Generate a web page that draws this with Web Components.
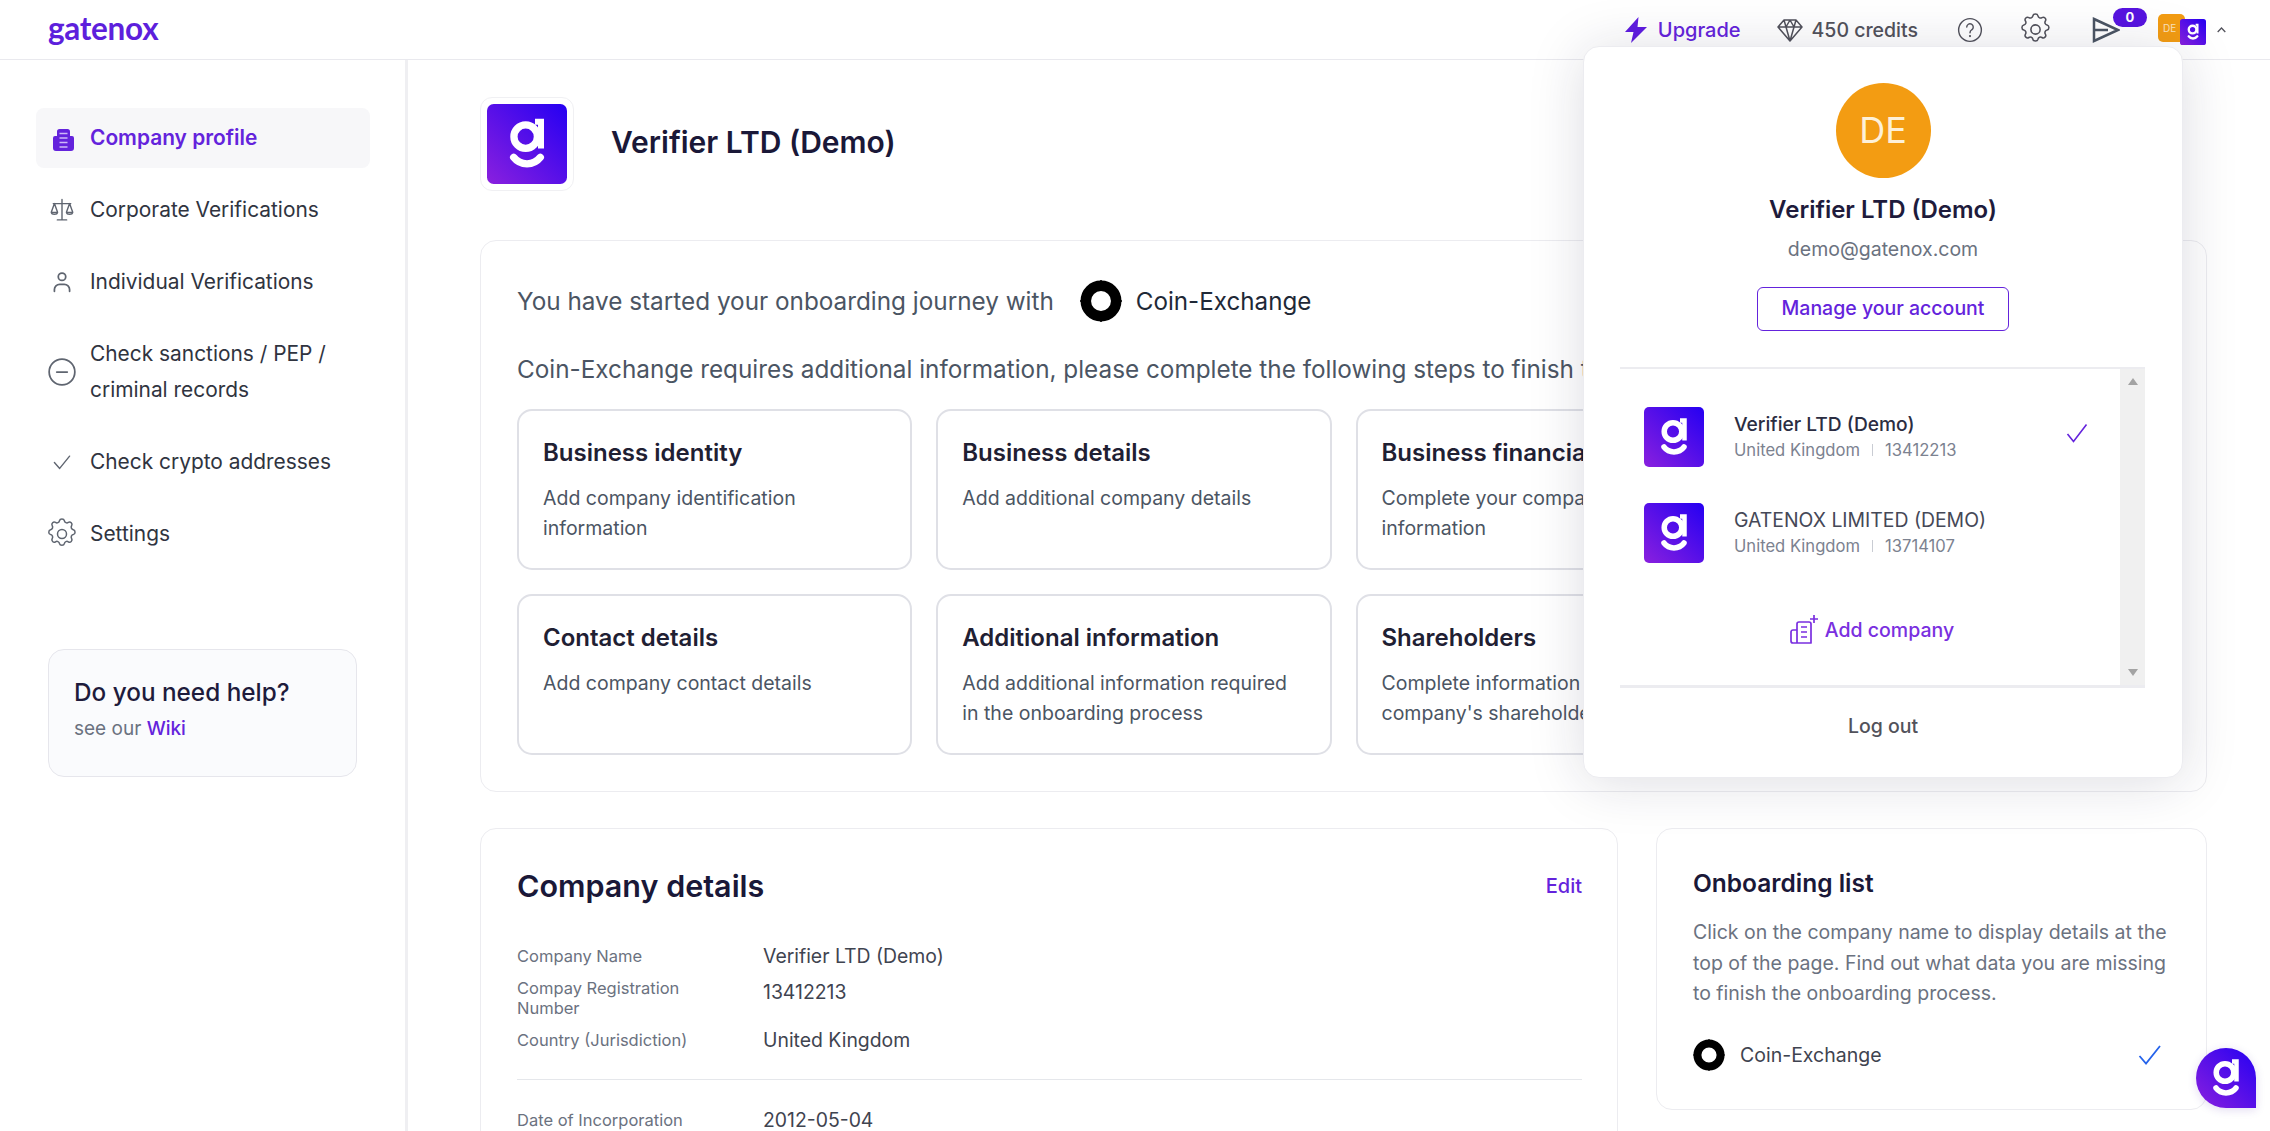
<!DOCTYPE html>
<html lang="en">
<head>
<meta charset="utf-8">
<title>Gatenox</title>
<style>
    html, body { margin: 0; height: 1131px; overflow: hidden; background: #fff; }
    body { font-family: Inter, "Liberation Sans", sans-serif; color: #1f2937; }
</style>
</head>
<body>
<gx-app>
    <gx-topbar slot="top"></gx-topbar>
    <gx-sidebar slot="side">
        <gx-nav-item icon="company" active>Company profile</gx-nav-item>
        <gx-nav-item icon="scale">Corporate Verifications</gx-nav-item>
        <gx-nav-item icon="user">Individual Verifications</gx-nav-item>
        <gx-nav-item icon="minus">Check sanctions / PEP / criminal records</gx-nav-item>
        <gx-nav-item icon="check">Check crypto addresses</gx-nav-item>
        <gx-nav-item icon="gear">Settings</gx-nav-item>
    </gx-sidebar>
    <gx-company-head>Verifier LTD (Demo)</gx-company-head>
    <gx-onboarding>
        <gx-step title="Business identity">Add company identification information</gx-step>
        <gx-step title="Business details">Add additional company details</gx-step>
        <gx-step title="Business financials">Complete your company financial information</gx-step>
        <span></span>
        <gx-step title="Contact details">Add company contact details</gx-step>
        <gx-step title="Additional information">Add additional information required in the onboarding process</gx-step>
        <gx-step title="Shareholders">Complete information about your company's shareholders</gx-step>
    </gx-onboarding>
    <gx-bottom-row>
        <gx-details>
            <gx-detail-row label="Company Name">Verifier LTD (Demo)</gx-detail-row>
            <gx-detail-row label="Compay Registration Number">13412213</gx-detail-row>
            <gx-detail-row label="Country (Jurisdiction)">United Kingdom</gx-detail-row>
            <hr slot="after">
            <gx-detail-row slot="after" label="Date of Incorporation">2012-05-04</gx-detail-row>
        </gx-details>
        <gx-onboarding-list></gx-onboarding-list>
    </gx-bottom-row>
    <gx-account-menu slot="overlay"></gx-account-menu>
    <gx-chat-bubble slot="overlay"></gx-chat-bubble>
</gx-app>

<script>
    // Small helper so each element only has to declare its markup
    function define(name, html, setup) {
        customElements.define(name, class extends HTMLElement {
            constructor() {
                super();
                this.attachShadow({ mode: 'open' });
            }
            connectedCallback() {
                const markup = typeof html === 'function' ? html(this) : html;
                this.shadowRoot.innerHTML = markup;
                if (setup) setup(this);
            }
        });
    }

    const PURPLE = '#6423dc';
    const stroke = (size, body, w = 1.5) => `<svg width="${size}" height="${size}" viewBox="0 0 24 24" fill="none" stroke="currentColor" stroke-width="${w}" stroke-linecap="round" stroke-linejoin="round">${body}</svg>`;

    const gearPath = '<path d="M10.3 3.2c.4-1.6 2.9-1.6 3.3 0a1.7 1.7 0 0 0 2.6 1.1c1.4-.9 3.1.8 2.2 2.2a1.7 1.7 0 0 0 1.1 2.6c1.6.4 1.6 2.9 0 3.3a1.7 1.7 0 0 0-1.1 2.6c.9 1.4-.8 3.1-2.2 2.2a1.7 1.7 0 0 0-2.6 1.1c-.4 1.6-2.9 1.6-3.3 0a1.7 1.7 0 0 0-2.6-1.1c-1.4.9-3.1-.8-2.2-2.2a1.7 1.7 0 0 0-1.1-2.6c-1.6-.4-1.6-2.9 0-3.3a1.7 1.7 0 0 0 1.1-2.6c-.9-1.4.8-3.1 2.2-2.2a1.7 1.7 0 0 0 2.6-1.1z"/><circle cx="12" cy="12" r="3"/>';

    const icons = {
        company: `<svg width="28" height="28" viewBox="0 0 28 28"><path fill="${PURPLE}" d="M9 7.500A2.500 2.500 0 0 1 11.500 5h8A2.500 2.500 0 0 1 22 7.500V12h2a2 2 0 0 1 2 2v10a3 3 0 0 1-3 3H8a3 3 0 0 1-3-3V14a2 2 0 0 1 2-2h2z"/><path fill="none" stroke="#cdb9f7" stroke-width="1.500" d="M11.500 9.500h8M11.500 14h8M11.500 18.500h8M11.500 23h8"/></svg>`,
        scale: stroke(28, '<path d="M12 3v17M8 20.500h8M4.500 6.500h15M5.500 6.500 2.800 14h5.400zM18.500 6.500 15.800 14h5.400zM2.800 14c.4 2.200 5 2.200 5.400 0M15.800 14c.4 2.200 5 2.200 5.400 0"/>', 1.200),
        user: stroke(28, '<circle cx="12" cy="7.500" r="3.200"/><path d="M5.500 20v-1.500a4.500 4.500 0 0 1 4.500-4.500h4a4.500 4.500 0 0 1 4.500 4.500V20"/>'),
        minus: stroke(28, '<circle cx="12" cy="12" r="11"/><path d="M7.500 12h9"/>'),
        check: stroke(28, '<path d="M5.500 12.500 10 17.500 18.500 7"/>', 1.200),
        gear: `<span style="margin:-4px;display:flex">${stroke(36, gearPath, 1)}</span>`
    };

    // Gatenox "g" mark, 60 unit box
    let markId = 0;
    function mark(size, radius = 5) {
        const id = 'gx' + (++markId);
        return `<svg width="${size}" height="${size}" viewBox="0 0 60 60" style="display:block">
            <defs><linearGradient id="${id}" x1="0" y1="1" x2="1" y2="0"><stop offset="0" stop-color="#8a20de"/><stop offset="1" stop-color="#2500f2"/></linearGradient></defs>
            <rect width="60" height="60" rx="${radius}" fill="url(#${id})"/>
            <circle cx="29" cy="24.500" r="8.800" fill="none" stroke="#fff" stroke-width="5.500"/>
            <path d="M36 13.400h4.500v20" fill="none" stroke="#fff" stroke-width="4.500"/>
            <path d="M20 40c5 6.500 15 6.500 20 0" fill="none" stroke="#fff" stroke-width="5.500" stroke-linecap="round"/>
        </svg>`;
    }

    function coin(size) {
        return `<svg width="${size}" height="${size}" viewBox="0 0 42 42" style="display:block;flex:none">
            <circle cx="21" cy="21" r="15.200" fill="none" stroke="#000" stroke-width="10.500"/>
            <path d="M21 0v6M21 36v6M0 21h6M36 21h6" stroke="#000" stroke-width="1.500"/>
        </svg>`;
    }

    define('gx-app', `
        <style>
            :host { display: block; position: relative; height: 1131px; overflow: hidden; background: #fff; }
            .body { display: flex; height: 1071px; }
            .main { flex: 1; min-width: 0; padding: 37px 63px 0 72px; }
        </style>
        <slot name="top"></slot>
        <div class="body">
            <slot name="side"></slot>
            <div class="main"><slot></slot></div>
        </div>
        <slot name="overlay"></slot>
    `);

    define('gx-topbar', `
        <style>
            :host { display: flex; align-items: center; height: 59px; border-bottom: 1px solid #e9e9ee; background: #fff; padding-left: 48px; box-sizing: content-box; }
            .logo { font: 700 31.500px/1 Lato, Inter, sans-serif; color: #5d1fdc; letter-spacing: -.3px; padding-bottom: 2px; }
            .right { margin-left: auto; display: flex; align-items: center; height: 100%; padding-right: 44px; color: #52525b; font-size: 20px; font-weight: 500; }
            .item { display: flex; align-items: center; }
            .upgrade { color: ${PURPLE}; gap: 10px; margin-right: 36px; }
            .credits { gap: 9px; margin-right: 39px; font-size: 19.500px; }
            .help { margin-right: 34px; display: flex; }
            .gear { margin-right: 38px; display: flex; }
            .send { position: relative; display: flex; margin-right: 38px; color: #4b5563; }
            .badge { position: absolute; left: 21px; top: -9px; width: 34px; height: 19px; border-radius: 10px; background: #5714e0; color: #fff; font-size: 13px; font-weight: 700; line-height: 19px; text-align: center; }
            .avatars { position: relative; width: 48px; height: 30px; margin-right: 11px; }
            .de { position: absolute; left: 0; top: -1px; width: 27px; height: 28px; border-radius: 5px; background: #f39c12; color: #fbe3bc; font-size: 10px; font-weight: 400; line-height: 28px; padding-left: 5px; box-sizing: border-box; }
            .g { position: absolute; left: 22px; top: 4px; }
            .chev { color: #52525b; display: flex; }
        </style>
        <div class="logo">gatenox</div>
        <div class="right">
            <div class="item upgrade">
                <svg width="24" height="26" viewBox="0 0 24 26"><path fill="#5f1ce0" d="M14.500 0 1 15h8.500L7 26 23 10h-9.500z"/></svg>
                <span>Upgrade</span>
            </div>
            <div class="item credits">
                <svg width="26" height="26" viewBox="0 0 26 26" fill="none" stroke="#52525b" stroke-width="1.500" stroke-linejoin="round"><path d="M7 3h12l6 7-12 14L1 10zM1 10h24M9 10l4 14 4-14-4-7zM7 3l2 7M19 3l-2 7"/></svg>
                <span>450 credits</span>
            </div>
            <div class="help">${stroke(26, '<circle cx="12" cy="12" r="10.500"/><path d="M9 9.300a3 3 0 1 1 4.600 2.500c-1 .7-1.600 1.300-1.600 2.700"/><path d="M12 17.500v.1" stroke-width="2"/>', 1.300)}</div>
            <div class="gear">${stroke(37, gearPath, 1)}</div>
            <div class="send">
                <svg width="28" height="26" viewBox="0 0 28 26" fill="none" stroke="currentColor" stroke-width="2.500"><path d="M2 2 26 13 2 24zM2 13h14"/></svg>
                <div class="badge">0</div>
            </div>
            <div class="avatars">
                <div class="de">DE</div>
                <div class="g">${mark(26, 6)}</div>
            </div>
            <div class="chev"><svg width="9" height="6" viewBox="0 0 9 6" fill="none" stroke="currentColor" stroke-width="1.300"><path d="M.7 5 4.500 1l3.800 4"/></svg></div>
        </div>
    `);

    define('gx-sidebar', `
        <style>
            :host { display: block; flex: none; width: 405px; box-sizing: content-box; border-right: 3px solid #efeff2; padding-top: 48px; }
            nav { display: flex; flex-direction: column; gap: 12px; margin-left: 36px; width: 334px; }
            gx-help { margin: 85px 0 0 48px; }
        </style>
        <nav><slot></slot></nav>
        <gx-help></gx-help>
    `);

    define('gx-nav-item', el => `
        <style>
            :host { display: flex; align-items: center; gap: 14px; padding: 12px 12px; border-radius: 8px; font-size: 20.900px; line-height: 36px; color: #30343f; }
            :host([active]) { background: #f7f7f9; color: ${PURPLE}; font-weight: 600; }
            .icon { flex: none; width: 28px; height: 28px; color: #5f6570; display: flex; }
        </style>
        <span class="icon">${icons[el.getAttribute('icon')]}</span>
        <span><slot></slot></span>
    `);

    define('gx-help', `
        <style>
            :host { display: block; width: 309px; height: 128px; box-sizing: border-box; background: #fafbfd; border: 1px solid #e6e6ec; border-radius: 16px; padding: 25px 25px; }
            h3 { margin: 0; font-size: 24.300px; line-height: 34px; font-weight: 500; color: #1e1b3c; }
            p { margin: 6px 0 0; font-size: 19px; line-height: 28px; color: #6b7280; }
            a { color: ${PURPLE}; font-weight: 500; }
        </style>
        <h3>Do you need help?</h3>
        <p>see our <a>Wiki</a></p>
    `);

    define('gx-company-head', `
        <style>
            :host { display: flex; align-items: center; gap: 37px; height: 94px; }
            .tile { width: 94px; height: 94px; box-sizing: border-box; border: 1px solid #f0f0f3; border-radius: 12px; padding: 6px 6px; }
            h1 { margin: 0 0 5px; font-size: 30px; font-weight: 600; color: #1a1838; }
        </style>
        <div class="tile">${mark(80, 5)}</div>
        <h1><slot></slot></h1>
    `);

    define('gx-onboarding', `
        <style>
            :host { display: block; box-sizing: border-box; height: 552px; margin-top: 49px; border: 1px solid #ececf0; border-radius: 16px; padding: 36px 36px; font-size: 24.300px; color: #4b5563; }
            .line { display: flex; align-items: center; height: 48px; white-space: nowrap; }
            .line b { font-weight: 400; color: #1f2937; margin: 0 0 0 14px; font-size: 24.200px; }
            .coin { margin-left: 26px; }
            .second { margin-top: 20px; }
            .grid { display: grid; grid-template-columns: repeat(4, 1fr); grid-auto-rows: 161px; gap: 24px; margin-top: 16px; }
        </style>
        <div class="line">You have started your onboarding journey with <span class="coin">${coin(42)}</span><b>Coin-Exchange</b></div>
        <div class="line second">Coin-Exchange requires additional information, please complete the following steps to finish the onboarding process.</div>
        <div class="grid"><slot></slot></div>
    `);

    define('gx-step', el => `
        <style>
            :host { display: block; box-sizing: border-box; border: 2px solid #dfe0e6; border-radius: 15px; padding: 27px 24px; color: #4b5563; }
            h4 { margin: 0 0 15px; font-size: 24px; line-height: 30px; font-weight: 600; color: #1f2033; white-space: nowrap; }
            p { margin: 0; font-size: 19.500px; line-height: 30px; }
        </style>
        <h4>${el.getAttribute('title')}</h4>
        <p><slot></slot></p>
    `);

    define('gx-bottom-row', `
        <style>
            :host { display: flex; align-items: flex-start; gap: 38px; margin-top: 36px; }
        </style>
        <slot></slot>
    `);

    define('gx-details', `
        <style>
            :host { display: block; flex: none; width: 1138px; box-sizing: border-box; height: 500px; border: 1px solid #ececf0; border-radius: 16px; padding: 35px 35px 36px 36px; }
            header { display: flex; align-items: center; justify-content: space-between; height: 42px; margin-bottom: 36px; }
            h2 { margin: 0; font-size: 30.500px; font-weight: 600; color: #1a1838; }
            a { color: ${PURPLE}; font-size: 20px; font-weight: 500; padding-top: 1px; }
            .rows { display: flex; flex-direction: column; gap: 8px; }
            ::slotted(hr) { border: 0; border-top: 1px solid #e5e7eb; margin: 25px 0 26px; }
        </style>
        <header><h2>Company details</h2><a>Edit</a></header>
        <div class="rows"><slot></slot></div>
        <slot name="after"></slot>
    `);

    define('gx-detail-row', el => `
        <style>
            :host { display: flex; align-items: center; min-height: 28px; }
            .k { flex: none; width: 246px; padding-right: 60px; box-sizing: border-box; font-size: 16.500px; line-height: 20px; color: #6b7280; }
            .v { align-self: flex-start; padding-top: 3px; font-size: 19.400px; line-height: 22px; color: #3f4450; }
        </style>
        <span class="k">${el.getAttribute('label')}</span>
        <span class="v"><slot></slot></span>
    `);

    define('gx-onboarding-list', `
        <style>
            :host { display: block; flex: none; width: 551px; box-sizing: border-box; height: 282px; border: 1px solid #ececf0; border-radius: 16px; padding: 36px 36px; }
            h3 { margin: 0; font-size: 24.500px; line-height: 36px; font-weight: 600; color: #1a1838; }
            p { margin: 16px 0 0; font-size: 19.500px; line-height: 30.500px; color: #6b7280; }
            .row { display: flex; align-items: center; gap: 15px; margin-top: 30px; font-size: 19.500px; color: #3f4450; }
            .tick { margin-left: auto; color: #2563eb; display: flex; margin-right: 8px; }
        </style>
        <h3>Onboarding list</h3>
        <p>Click on the company name to display details at the top of the page. Find out what data you are missing to finish the onboarding process.</p>
        <div class="row">${coin(32)}<span>Coin-Exchange</span>
            <span class="tick"><svg width="24" height="20" viewBox="0 0 24 20" fill="none" stroke="currentColor" stroke-width="1.800"><path d="M1.500 11 8 18.500 22 1"/></svg></span>
        </div>
    `);

    define('gx-account-menu', `
        <style>
            :host { position: absolute; left: 1583px; top: 46px; width: 600px; height: 732px; box-sizing: border-box; background: #fff; border: 1px solid #ececf0; border-radius: 16px; box-shadow: 0 4px 55px rgba(30, 30, 60, .15); display: flex; flex-direction: column; align-items: center; padding-top: 36px; }
            .avatar { width: 95px; height: 95px; border-radius: 50%; background: #f39c12; color: #fdf0d8; font-size: 36px; line-height: 95px; text-align: center; }
            .name { margin-top: 14px; font-size: 24px; line-height: 36px; font-weight: 600; color: #1e1b3c; }
            .mail { margin-top: 7px; font-size: 19.500px; line-height: 28px; color: #6b7280; }
            .btn { margin-top: 24px; width: 252px; height: 44px; box-sizing: border-box; border: 1.500px solid ${PURPLE}; border-radius: 6px; color: ${PURPLE}; font-size: 19.500px; font-weight: 500; line-height: 41px; text-align: center; }
            .list { margin-top: 36px; width: 525px; height: 321px; box-sizing: border-box; border-top: 2px solid #ececf0; border-bottom: 3px solid #ececf0; display: flex; margin-left: -1px; }
            .scroll { flex: 1; padding: 38px 0 0 24px; }
            .bar { flex: none; width: 25px; background: #f0f0f0; display: flex; flex-direction: column; justify-content: space-between; align-items: center; padding: 9px 0 9px; box-sizing: border-box; }
            .arrow { width: 0; height: 0; border: 5.500px solid transparent; border-top: 0; border-bottom: 7px solid #a3a3a3; }
            .arrow.down { transform: rotate(180deg); }
            .add { display: flex; align-items: center; justify-content: center; gap: 7px; margin: 52px 0 0 -20px; color: #7a2fe0; font-size: 19.500px; font-weight: 500; }
            .logout { flex: 1; display: flex; align-items: center; font-size: 19.500px; font-weight: 500; color: #52525b; padding-bottom: 14px; }
        </style>
        <div class="avatar">DE</div>
        <div class="name">Verifier LTD (Demo)</div>
        <div class="mail">demo@gatenox.com</div>
        <div class="btn">Manage your account</div>
        <div class="list">
            <div class="scroll">
                <gx-company-option name="Verifier LTD (Demo)" number="13412213" selected></gx-company-option>
                <gx-company-option name="GATENOX LIMITED (DEMO)" number="13714107"></gx-company-option>
                <div class="add">
                    <svg width="28" height="30" viewBox="0 0 28 30" fill="none" stroke="#7a2fe0" stroke-width="1.700" stroke-linejoin="round"><path d="M7 28V9a2 2 0 0 1 2-2h10a2 2 0 0 1 2 2v19zM7 15H3a2 2 0 0 0-2 2v9a2 2 0 0 0 2 2h18M11 12h6M11 17h6M11 22h6M24 0v8M20 4h8"/></svg>
                    <span>Add company</span>
                </div>
            </div>
            <div class="bar"><span class="arrow"></span><span class="arrow down"></span></div>
        </div>
        <div class="logout">Log out</div>
    `);

    define('gx-company-option', el => `
        <style>
            :host { display: flex; align-items: center; height: 60px; margin-bottom: 36px; padding-right: 32px; }
            .t { margin-left: 30px; flex: 1; }
            .n { font-size: 19.400px; line-height: 26px; color: #454857; }
            :host([selected]) .n { color: #2b2d42; font-weight: 500; font-size: 19.200px; }
            .s { font-size: 16.600px; line-height: 26px; color: #7c8290; display: flex; align-items: center; }
            .s i { width: 1px; height: 12px; background: #c9ccd3; margin: 0 12px; }
            svg.tick { margin-bottom: 8px; }
        </style>
        ${mark(60, 5)}
        <div class="t">
            <div class="n">${el.getAttribute('name')}</div>
            <div class="s"><span>United Kingdom</span><i></i><span>${el.getAttribute('number')}</span></div>
        </div>
        ${el.hasAttribute('selected') ? `<svg class="tick" width="22" height="20" viewBox="0 0 22 20" fill="none" stroke="${PURPLE}" stroke-width="1.600"><path d="M1.500 11 7.500 18.500 20.500 1.500"/></svg>` : ''}
    `);

    define('gx-chat-bubble', `
        <style>
            :host { position: absolute; left: 2196px; top: 1048px; width: 60px; height: 60px; border-radius: 30px 30px 0 30px; overflow: hidden; box-shadow: 0 2px 10px rgba(60,20,160,.15); }
        </style>
        ${mark(60, 0)}
    `);
</script>
</body>
</html>
